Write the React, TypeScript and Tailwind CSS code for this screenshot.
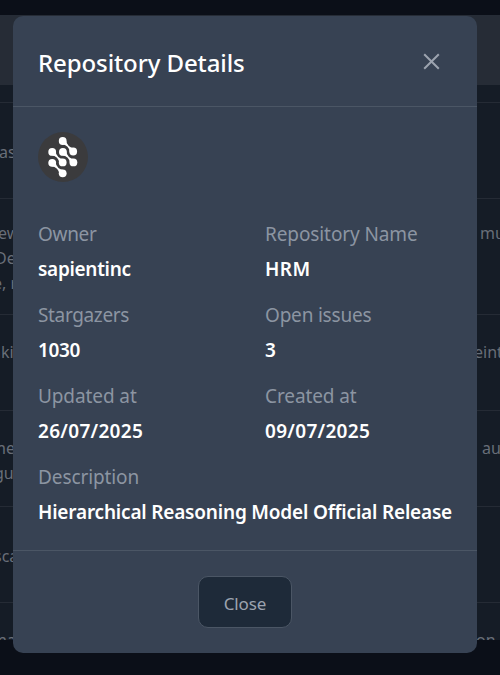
import React from "react";

type Line = { left: string; leftClass: string; right?: string; rightClass?: string };

const rows: { height: string; lines: Line[] }[] = [
  { height: "h-4 justify-center", lines: [] },
  { height: "h-24 justify-center pt-1", lines: [{ left: "as", leftClass: "-ml-px" }] },
  {
    height: "h-[116px] justify-center pt-1",
    lines: [
      { left: "ew", leftClass: "-ml-[2px]", right: "mu", rightClass: "pl-[15px]" },
      { left: "De", leftClass: "-ml-[5px]" },
      { left: "e, r", leftClass: "-ml-[7px]" },
    ],
  },
  {
    height: "h-24 justify-start pt-[25px]",
    lines: [{ left: "nki", leftClass: "-ml-[9px]", right: "eint", rightClass: "pl-[9px]" }],
  },
  {
    height: "h-24 justify-center pt-1",
    lines: [
      { left: "me", leftClass: "-ml-[9px]", right: "au", rightClass: "pl-[17px]" },
      { left: "gu", leftClass: "-ml-[6px]" },
    ],
  },
  { height: "h-24 justify-center pt-1", lines: [{ left: "sca", leftClass: "-ml-[6px]" }] },
  {
    height: "h-[76px] justify-start pt-[25px]",
    lines: [{ left: "ma", leftClass: "-ml-[8px]", right: "on", rightClass: "pl-[11px]" }],
  },
];

const fields = [
  { label: "Owner", value: "sapientinc", lt: "tracking-[-0.3px]", vt: "tracking-[-0.3px]" },
  { label: "Repository Name", value: "HRM", lt: "tracking-[-0.1px]", vt: "tracking-[0.5px]" },
  { label: "Stargazers", value: "1030", lt: "tracking-[-0.35px]", vt: "tracking-[-0.4px]" },
  { label: "Open issues", value: "3", lt: "tracking-[-0.2px]", vt: "tracking-[-0.2px]" },
  { label: "Updated at", value: "26/07/2025", lt: "tracking-[-0.1px]", vt: "tracking-[0.3px]" },
  { label: "Created at", value: "09/07/2025", lt: "tracking-[-0.1px]", vt: "tracking-[0.3px]" },
  {
    label: "Description",
    value: "Hierarchical Reasoning Model Official Release",
    lt: "tracking-[-0.1px]",
    vt: "tracking-[-0.19px]",
    wide: true,
  },
];

function Table() {
  return (
    <div className="flex h-[675px] flex-col bg-[#0b0f18] pt-[15px] text-base leading-[25px] text-[#686e78]">
      <div className="h-[70px] shrink-0 bg-[#262c36]" />
      <div className="h-[555px] shrink-0 overflow-hidden bg-[#151c26] pt-[2px]">
        {rows.map((row, i) => (
          <div key={i} className={`${row.height} flex flex-col border-b border-[#252b35]`}>
            {row.lines.map((line) => (
              <div key={line.left} className="flex h-[25px] whitespace-nowrap">
                <div className="w-[465px] shrink-0">
                  <span className={`inline-block ${line.leftClass}`}>{line.left}</span>
                </div>
                <div className={`w-[35px] shrink-0 overflow-hidden ${line.rightClass ?? ""}`}>{line.right}</div>
              </div>
            ))}
          </div>
        ))}
      </div>
    </div>
  );
}

const links = [
  [24.7, 9],
  [14.2, 19.9],
  [24.9, 19.9],
  [14.2, 30.8],
];

function Avatar() {
  return (
    <svg className="block size-[50px]" viewBox="0 0 50 50" aria-hidden="true">
      <circle cx="25" cy="25" r="25" fill="#3b3b3d" />
      {links.map(([x, y]) => (
        <g key={`${x}-${y}`} transform={`translate(${x} ${y})`} fill="#fff">
          <circle r="3.9" />
          <circle cx="10.5" cy="10.5" r="3.9" />
          <path d="M3.1-1.2Q4.4 6.5 11.7 7.4L7.4 11.7Q6.5 4.4-1.2 3.1Z" />
        </g>
      ))}
    </svg>
  );
}

export default function App() {
  return (
    <div className="relative h-[675px] w-[500px] overflow-hidden font-['Noto_Sans','Open_Sans',sans-serif]">
      <Table />
      <div className="absolute inset-0 px-[13px] pt-4">
        <section role="dialog" className="flex h-[637px] w-[464px] flex-col rounded-[10px] bg-[#374253]">
          <header className="flex h-[91px] shrink-0 items-center justify-between border-b border-[#4b5665] pr-9 pl-[25px]">
            <h2 className="pt-1 text-2xl font-medium tracking-[-0.1px] text-white">Repository Details</h2>
            <button className="text-[#9ca3af]" aria-label="Close dialog">
              <svg className="block size-[19px]" viewBox="0 0 19 19" fill="none" stroke="currentColor" strokeWidth="2">
                <path d="M2.2 2.2 16.8 16.8M16.8 2.2 2.2 16.8" />
              </svg>
            </button>
          </header>
          <div className="h-[443px] shrink-0 px-[25px] pt-[25px]">
            <Avatar />
            <dl className="mt-[35px] grid grid-cols-[227px_187px] gap-y-[11px]">
              {fields.map((field) => (
                <div key={field.label} className={`h-[70px] whitespace-nowrap ${field.wide ? "col-span-2" : ""}`}>
                  <dt className={`h-[35px] text-[19px] leading-[35px] text-[#8c95a2] ${field.lt}`}>{field.label}</dt>
                  <dd className={`h-[35px] text-[19px] leading-[35px] font-semibold text-white ${field.vt}`}>
                    {field.value}
                  </dd>
                </div>
              ))}
            </dl>
          </div>
          <footer className="flex h-[103px] shrink-0 items-center justify-center border-t border-[#4b5665]">
            <button className="h-[52px] w-[94px] rounded-[10px] border border-[#4b5665] bg-[#1e2a39] pt-[3px] text-[17px] tracking-[-0.1px] text-[#9ca3af]">
              Close
            </button>
          </footer>
        </section>
      </div>
    </div>
  );
}
